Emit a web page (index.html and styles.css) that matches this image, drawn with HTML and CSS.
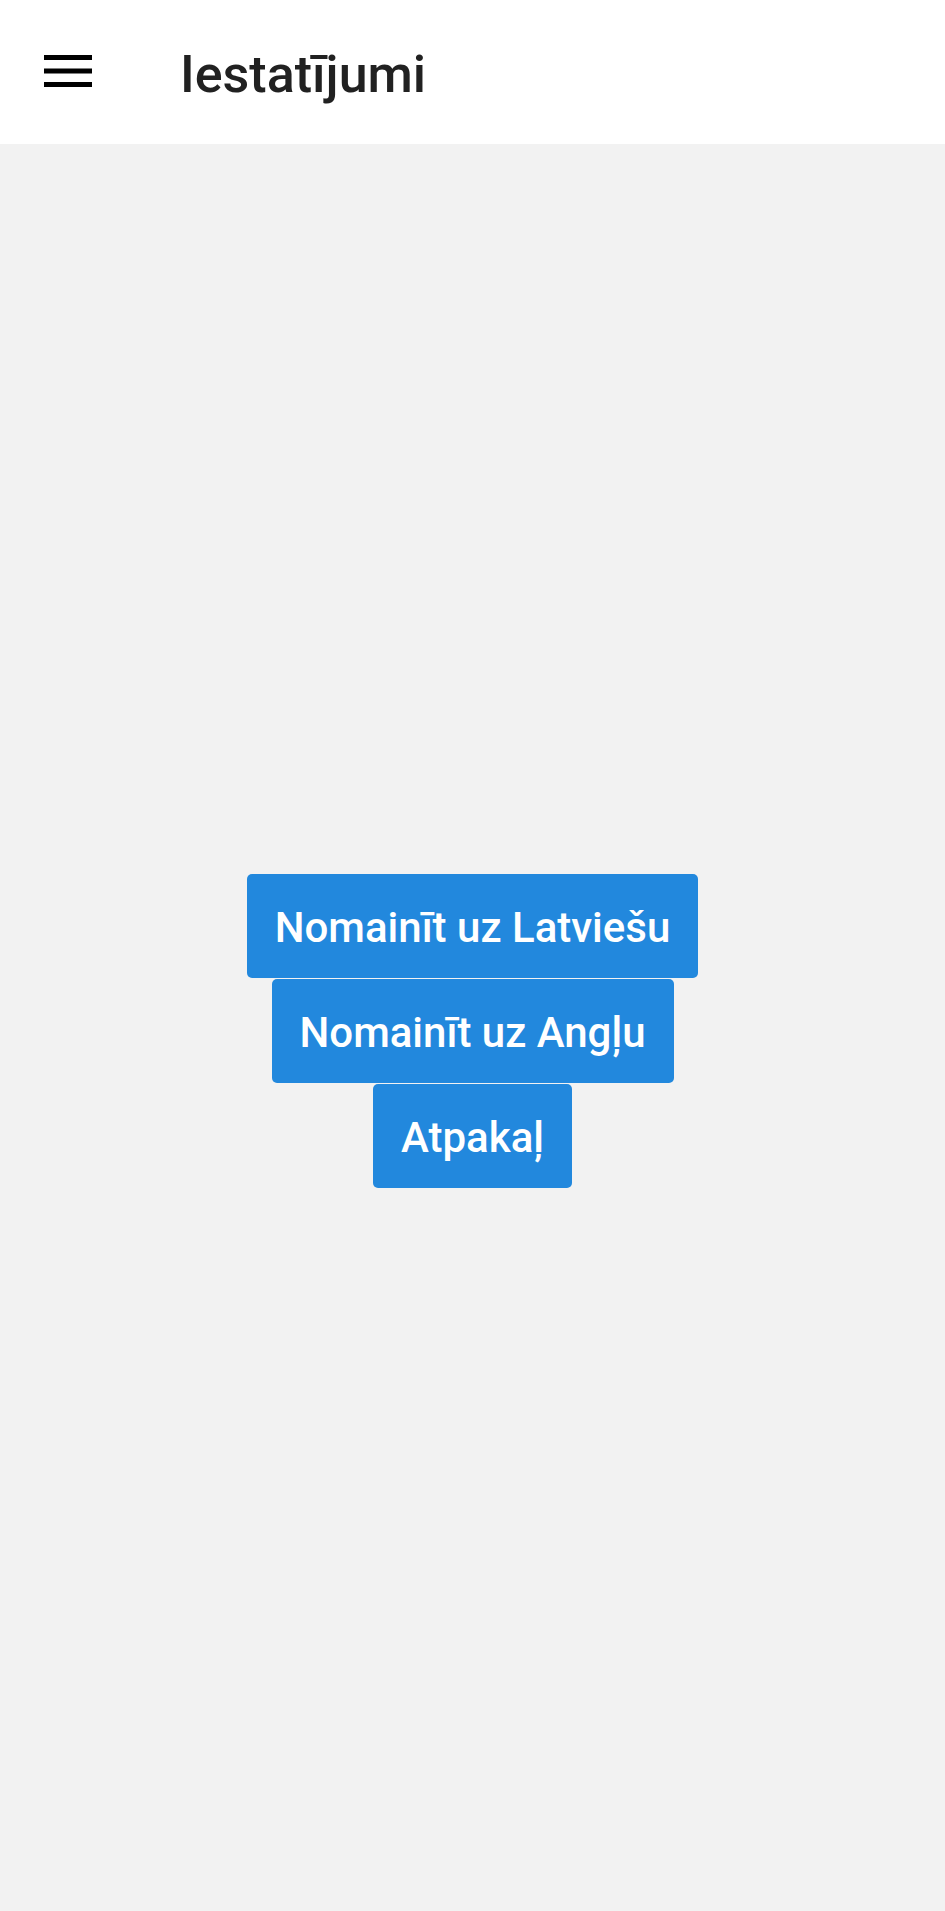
FILE: index.html
```html
<!DOCTYPE html>
<html lang="lv">
<head>
<meta charset="utf-8">
<title>Iestatījumi</title>
<link rel="stylesheet" href="styles.css">
</head>
<body>
<header class="toolbar">
  <button class="menu-btn" aria-label="Izvēlne">
    <svg width="48" height="32" viewBox="0 0 48 32">
      <rect x="0" y="0" width="48" height="5" fill="#000"/>
      <rect x="0" y="13.5" width="48" height="5" fill="#000"/>
      <rect x="0" y="27" width="48" height="5" fill="#000"/>
    </svg>
  </button>
  <h1 class="title">Iestatījumi</h1>
</header>
<main class="content">
  <button class="btn">Nomainīt uz Latviešu</button>
  <button class="btn">Nomainīt uz Angļu</button>
  <button class="btn">Atpakaļ</button>
</main>
</body>
</html>
```
FILE: styles.css
```css
html, body {
  margin: 0;
  padding: 0;
}
body {
  background: #f2f2f2;
  font-family: Roboto, "Noto Sans", sans-serif;
  width: 945px;
  height: 1911px;
  overflow: hidden;
}
.toolbar {
  height: 144px;
  background: #ffffff;
  display: flex;
  align-items: center;
  box-sizing: border-box;
  padding-left: 44px;
}
.menu-btn {
  background: none;
  border: 0;
  padding: 0;
  margin: 0;
  width: 48px;
  height: 32px;
  display: block;
  margin-top: -2px;
}
.menu-btn svg {
  display: block;
}
.title {
  margin: 5px 0 0 88px;
  font-size: 52px;
  font-weight: 500;
  color: #212121;
  line-height: 1;
  letter-spacing: 0;
}
.content {
  height: 1767px;
  box-sizing: border-box;
  padding-top: 7px;
  display: flex;
  flex-direction: column;
  align-items: center;
  justify-content: center;
  gap: 1px;
}
.btn {
  background: #2288dd;
  color: #ffffff;
  border: 0;
  border-radius: 5px;
  height: 104px;
  padding: 3px 28px 0;
  font-family: Roboto, "Noto Sans", sans-serif;
  font-size: 42px;
  font-weight: 500;
  letter-spacing: 0;
}
```
